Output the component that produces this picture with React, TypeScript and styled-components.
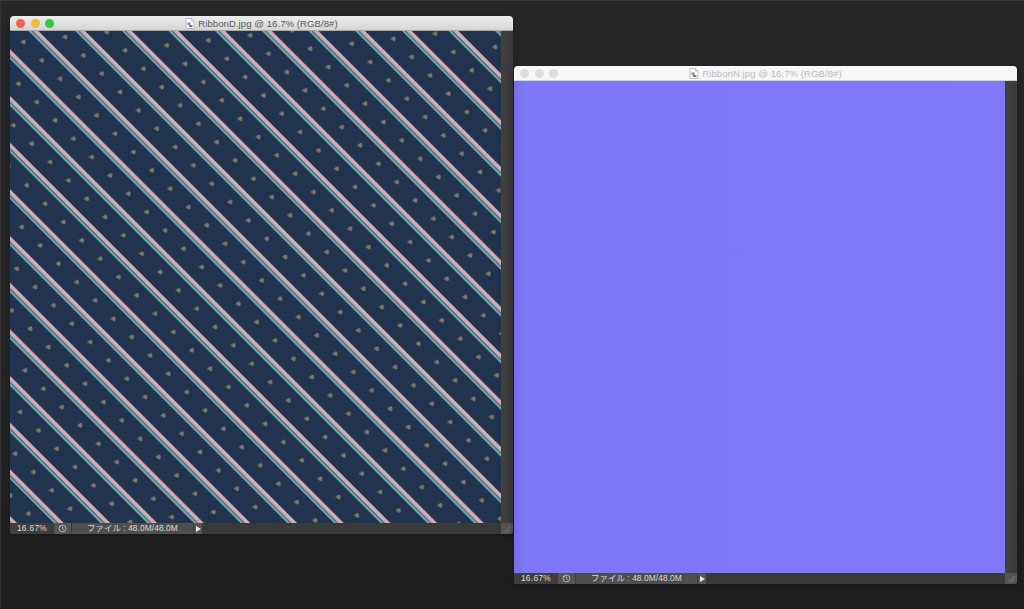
import styled, { createGlobalStyle } from "styled-components";

const GlobalStyle = createGlobalStyle`
	html, body {
		margin: 0;
		padding: 0;
		height: 100%;
		overflow: hidden;
		background: #252525;
	}
`;

const Desktop = styled.div`
	position: relative;
	width: 1024px;
	height: 609px;
	overflow: hidden;
	background: linear-gradient(#272727, #262626 55%, #1e1e1e);
	box-shadow: inset 0 1px 0 #3a3a3a, inset 1px 0 0 #333;
	font-family: "Liberation Sans", "Noto Sans CJK JP", sans-serif;
`;

const Window = styled.div<{ $left: number; $top: number }>`
	position: absolute;
	left: ${props => props.$left}px;
	top: ${props => props.$top}px;
	width: 503px;
	height: 518px;
	display: flex;
	flex-direction: column;
	border-radius: 4px 4px 3px 3px;
	overflow: hidden;
	background: #3c3c3c;
	box-shadow: 0 2px 10px rgba(0, 0, 0, 0.25);
`;

const TitleBar = styled.div<{ $active: boolean }>`
	position: relative;
	flex: 0 0 15px;
	display: flex;
	align-items: center;
	justify-content: center;
	gap: 3px;
	background: ${props => (props.$active ? "linear-gradient(#ededed, #d5d5d5)" : "#f6f6f6")};
	border-bottom: 1px solid ${props => (props.$active ? "#a8a8a8" : "#d0d0d0")};
	box-sizing: border-box;
	color: ${props => (props.$active ? "#5c5c5c" : "#bcbcbc")};
	font-size: 9.6px;
	letter-spacing: 0.04px;
	white-space: nowrap;
`;

const Lights = styled.div`
	position: absolute;
	left: 6px;
	top: 3px;
	display: flex;
	gap: 5.5px;
`;

const Light = styled.span<{ $color: string }>`
	width: 9px;
	height: 9px;
	border-radius: 50%;
	background: ${props => props.$color};
`;

const Main = styled.div`
	flex: 1;
	display: flex;
	min-height: 0;
`;

const Canvas = styled.div<{ $flat?: boolean }>`
	width: 491px;
	height: 100%;
	overflow: hidden;
	background: ${props => (props.$flat ? "linear-gradient(to right, #766ee9, #7e77f6 10px, #7f79f8)" : "#22344d")};
	box-shadow: ${props => (props.$flat ? "0 1px 0 #5f5ab8" : "none")};

	svg {
		display: block;
		filter: blur(0.45px);
	}
`;

const ScrollTrack = styled.div`
	flex: 1;
	background: linear-gradient(to right, #414141, #3a3a3a);
`;

const StatusBar = styled.div`
	flex: 0 0 11px;
	display: flex;
	align-items: stretch;
	background: #3a3a3a;
	color: #dcdcdc;
	font-size: 8.4px;
	line-height: 11px;
	letter-spacing: 0.3px;
	white-space: nowrap;
`;

const ZoomField = styled.div`
	width: 43px;
	padding-left: 1px;
	box-sizing: border-box;
	text-align: center;
	background: #3f3f3f;
`;

const IconCell = styled.div`
	width: 17px;
	margin-left: 1px;
	display: flex;
	align-items: center;
	justify-content: center;
	background: #555;
`;

const FileInfo = styled.div`
	width: 121px;
	margin-left: 1px;
	text-align: center;
	background: #4f4f4f;
	color: #d8d8d8;
	letter-spacing: 0.08px;
`;

const ArrowCell = styled.div`
	width: 8px;
	margin-left: 1px;
	display: flex;
	align-items: center;
	justify-content: center;
	background: #555;
`;

const ArrowGlyph = styled.span`
	width: 0;
	height: 0;
	border-left: 5px solid #e8e8e8;
	border-top: 3px solid transparent;
	border-bottom: 3px solid transparent;
`;

const StatusSpacer = styled.div`
	flex: 1;
`;

const ResizeGrip = styled.div`
	flex: 0 0 12px;
	display: flex;
	align-items: center;
	justify-content: center;
	background: #545454;
`;

const DocIcon = () => (
	<svg width="10" height="11" viewBox="0 0 10 11">
		<path d="M1 .5h5.5L9 3v7.5H1z" fill="#fafafa" stroke="#9a9a9a" strokeWidth=".6" />
		<path d="M6.5.5V3H9" fill="#ddd" stroke="#9a9a9a" strokeWidth=".5" />
		<rect x="2.5" y="4.5" width="3" height="2.5" fill="#7a94b8" />
		<rect x="4" y="7" width="3.5" height="2" fill="#5f7fa8" />
	</svg>
);

const HistoryIcon = () => (
	<svg width="9" height="9" viewBox="0 0 9 9" fill="none" stroke="#c4c4c4" strokeWidth=".8">
		<circle cx="4.5" cy="4.5" r="3.4" />
		<path d="M4.5 2.6v2l1.5 1.2M.8 2.2l1.2 1 .6-1.4" />
	</svg>
);

const GripIcon = () => (
	<svg width="8" height="8" viewBox="0 0 8 8" fill="none" stroke="#8a8a8a" strokeWidth=".8">
		<path d="M1 7.5 7.5 1M4 7.5 7.5 4" />
	</svg>
);

// tile runs along the stripes, so the whole texture is one rotated rectangle
const RibbonTexture = () => (
	<svg width="491" height="492" viewBox="0 0 491 492">
		<defs>
			<pattern
				id="ribbon"
				width="25.93"
				height="33"
				patternUnits="userSpaceOnUse"
				patternTransform="rotate(45) translate(4 22)"
			>
				<rect width="25.93" height="33" fill="#22344d" />
				<rect y="23.9" width="25.93" height="3.9" fill="#d2acb6" />
				<rect y="28.6" width="25.93" height="2.2" fill="#74b2b8" />
				<path
					d="M-2.8 0 .8-2.4Q2.600-2.400 2.600-.8V.8Q2.600 2.400.8 2.400z"
					transform="translate(13 9.6) rotate(-45)"
					fill="#7f7862"
				/>
			</pattern>
		</defs>
		<rect width="491" height="492" fill="url(#ribbon)" />
	</svg>
);

const DocumentWindow = ({ name, left, top, active }: { name: string, left: number, top: number, active: boolean }): JSX.Element => {
	const lights = active ? ["#f25f57", "#f8b73a", "#2fc84a"] : ["#dcdcdc", "#dcdcdc", "#dcdcdc"];

	return (
		<Window $left={left} $top={top}>
			<TitleBar $active={active}>
				<Lights>
					{lights.map((color, i) => <Light key={i} $color={color} />)}
				</Lights>
				<DocIcon />
				<span>{name} @ 16.7% (RGB/8#)</span>
			</TitleBar>

			<Main>
				<Canvas $flat={!active}>
					{active && <RibbonTexture />}
				</Canvas>
				<ScrollTrack />
			</Main>

			<StatusBar>
				<ZoomField>16.67%</ZoomField>
				<IconCell><HistoryIcon /></IconCell>
				<FileInfo>ファイル : 48.0M/48.0M</FileInfo>
				<ArrowCell><ArrowGlyph /></ArrowCell>
				<StatusSpacer />
				<ResizeGrip><GripIcon /></ResizeGrip>
			</StatusBar>
		</Window>
	);
};

export default function App(): JSX.Element {
	return (
		<>
			<GlobalStyle />
			<Desktop>
				<DocumentWindow name="RibbonD.jpg" left={10} top={16} active />
				<DocumentWindow name="RibbonN.jpg" left={514} top={66} active={false} />
			</Desktop>
		</>
	);
}
